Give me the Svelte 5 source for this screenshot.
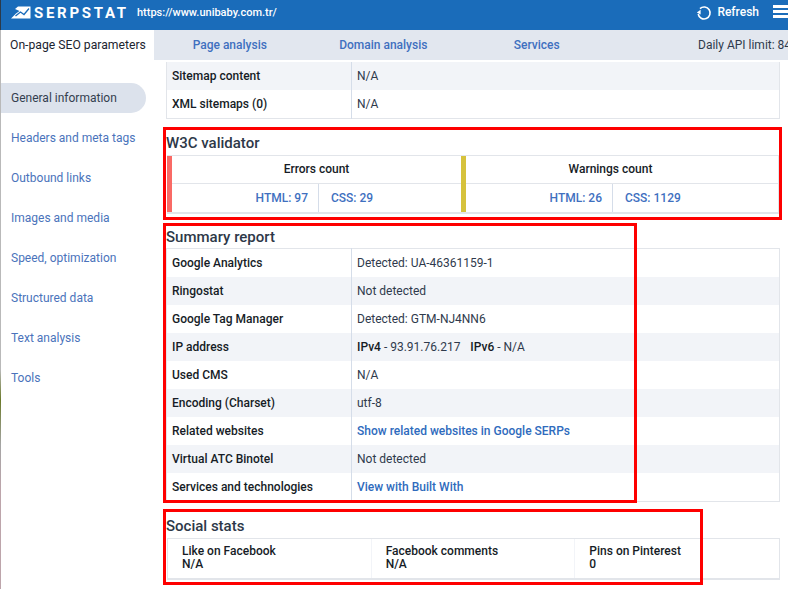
<script>
  const navTabs = ["Page analysis", "Domain analysis", "Services"];
  const sideItems = [
    "General information",
    "Headers and meta tags",
    "Outbound links",
    "Images and media",
    "Speed, optimization",
    "Structured data",
    "Text analysis",
    "Tools"
  ];
  const validators = [
    { title: "Errors count", color: "#f96a65", html: 97, css: 29 },
    { title: "Warnings count", color: "#d6c23c", html: 26, css: 1129 }
  ];
  const socials = [
    ["Like on Facebook", "N/A"],
    ["Facebook comments", "N/A"],
    ["Pins on Pinterest", "0"]
  ];
</script>

<div class="page">
  <div class="edge"></div>
  <header class="topbar">
    <svg class="logo" width="20" height="13" viewBox="0 0 20 13">
      <path fill="#fff" d="M7 0.500H19.500V12.500H0L5 7.500 8.500 5 4 3z" />
      <path fill="none" stroke="#1a6cba" stroke-width="1.300" d="M4.500 10L9.500 6 13 8.500 18 2.500" />
    </svg>
    <span class="brand">SERPSTAT</span>
    <span class="url">https://www.unibaby.com.tr/</span>
    <span class="refresh">
      <svg width="16" height="16" viewBox="0 0 16 16" fill="none">
        <path d="M4 3.600A6 6 0 1 1 2.200 9" stroke="#fff" stroke-width="1.600" />
        <path d="M0.800 7.600L4.600 4.800V9.600z" fill="#fff" />
      </svg>
      Refresh
    </span>
    <span class="burger"><i></i><i></i><i></i></span>
  </header>

  <nav class="tabs">
    <div class="tab-active">On-page SEO parameters</div>
    <div class="tab-list">
      {#each navTabs as tab}
        <span class="tab">{tab}</span>
      {/each}
    </div>
    <span class="limit">Daily API limit: 84</span>
  </nav>

  <div class="body">
    <aside class="side">
      {#each sideItems as item, i}
        <div class="side-item" class:current={i === 0}>{item}</div>
      {/each}
    </aside>

    <main class="content">
      <table class="grid first">
        <tbody>
          <tr class="odd"><th>Sitemap content</th><td>N/A</td></tr>
          <tr><th>XML sitemaps (0)</th><td>N/A</td></tr>
        </tbody>
      </table>

      <section class="w3c">
        <h2>W3C validator</h2>
        <div class="validators">
          {#each validators as v}
            <div class="validator" style="border-left-color: {v.color}">
              <div class="v-title">{v.title}</div>
              <div class="v-counts">
                <span class="v-html">HTML: {v.html}</span>
                <span class="v-css">CSS: {v.css}</span>
              </div>
            </div>
          {/each}
        </div>
      </section>

      <section class="summary">
        <h2>Summary report</h2>
        <table class="grid">
          <tbody>
            <tr><th>Google Analytics</th><td>Detected: UA-46361159-1</td></tr>
            <tr class="odd"><th>Ringostat</th><td>Not detected</td></tr>
            <tr><th>Google Tag Manager</th><td>Detected: GTM-NJ4NN6</td></tr>
            <tr class="odd">
              <th>IP address</th>
              <td><b>IPv4</b> - 93.91.76.217 &nbsp; <b class="ipv6">IPv6</b> - N/A</td>
            </tr>
            <tr><th>Used CMS</th><td>N/A</td></tr>
            <tr class="odd"><th>Encoding (Charset)</th><td>utf-8</td></tr>
            <tr><th>Related websites</th><td class="link">Show related websites in Google SERPs</td></tr>
            <tr class="odd"><th>Virtual ATC Binotel</th><td>Not detected</td></tr>
            <tr><th>Services and technologies</th><td class="link">View with Built With</td></tr>
          </tbody>
        </table>
        <div class="mark mark-summary"></div>
      </section>

      <section class="social">
        <h2>Social stats</h2>
        <div class="social-row">
          {#each socials as s}
            <div class="social-cell">{s[0]}<br />{s[1]}</div>
          {/each}
        </div>
        <div class="mark mark-social"></div>
      </section>
    </main>
  </div>
</div>

<style>
  :global(body) {
    margin: 0;
    background: #fff;
    overflow: hidden;
  }

  .page {
    position: relative;
    width: 788px;
    height: 589px;
    overflow: hidden;
    font-family: Roboto, "Liberation Sans", sans-serif;
    font-size: 12px;
    color: #1c2430;
  }

  /* sliver of whatever window sits behind */
  .edge {
    position: absolute;
    left: 0;
    top: 0;
    bottom: 0;
    width: 1px;
    background: linear-gradient(#2b3a4a 0, #2b3a4a 30px, #b9b9b9 30px, #b9b9b9 370px, #6b7a2a 400px, #a5a5a5 445px, #bda5ab 490px, #bda5ab 100%);
  }

  .topbar {
    height: 30px;
    box-sizing: border-box;
    padding-bottom: 6px;
    background: #1a6cba;
    display: flex;
    align-items: center;
    color: #fff;
  }

  .logo {
    margin-left: 11px;
    flex: none;
  }

  .brand {
    margin: 1px 0 0 3px;
    font-size: 15px;
    font-weight: 700;
    letter-spacing: 2.700px;
    width: 92px;
    white-space: nowrap;
  }

  .url {
    margin-left: 11px;
    font-size: 11px;
    font-weight: 500;
  }

  .refresh {
    margin-left: auto;
    display: flex;
    align-items: center;
    gap: 5px;
    font-size: 12px;
    font-weight: 500;
  }

  .refresh svg {
    margin-top: 2px;
  }

  .burger {
    width: 18px;
    margin: -1px -3px 0 14px;
    display: flex;
    flex-direction: column;
    gap: 2px;
    flex: none;
  }

  .burger i {
    height: 3px;
    background: #fff;
    display: block;
  }

  .tabs {
    height: 30px;
    background: #e2e7ef;
    display: flex;
    align-items: center;
    white-space: nowrap;
  }

  .tab-active {
    width: 144px;
    height: 30px;
    padding-left: 10px;
    line-height: 30px;
    font-size: 12.200px;
    background: #fff;
    flex: none;
  }

  .tab-list {
    display: flex;
    margin-left: -1px;
  }

  .tab {
    width: 153.500px;
    text-align: center;
    color: #3f70bf;
    font-weight: 500;
  }

  .limit {
    position: absolute;
    left: 698px;
    top: 38px;
    color: #2f3a4c;
  }

  .body {
    display: flex;
  }

  .side {
    width: 166px;
    flex: none;
    padding-top: 23px;
  }

  .side-item {
    width: 135px;
    height: 30px;
    line-height: 30px;
    padding-left: 11px;
    margin-bottom: 10px;
    color: #4a73bb;
  }

  .side-item.current {
    background: #dce2ec;
    color: #34404f;
    border-radius: 0 15px 15px 0;
  }

  .content {
    width: 622px;
    flex: none;
  }

  .grid {
    width: 614px;
    border-collapse: collapse;
    border: 1px solid #e2e5ea;
    table-layout: fixed;
  }

  .grid.first {
    margin-top: 2px;
    border-top: none;
  }

  .grid th {
    width: 179px;
    height: 28px;
    padding: 0 0 0 5px;
    text-align: left;
    font-weight: 500;
    color: #161c26;
    border-right: 1px solid #d5dde9;
  }

  .grid td {
    padding: 0 0 0 5px;
    color: #2f3a4c;
  }

  .grid .odd {
    background: #f2f4f8;
  }

  .grid b {
    font-weight: 500;
    color: #161c26;
  }

  .grid b.ipv6 {
    margin-left: 1px;
  }

  .grid td.link {
    color: #2f6bbd;
    font-weight: 500;
  }

  section {
    position: relative;
  }

  h2 {
    margin: 0;
    font-size: 15px;
    font-weight: 500;
    line-height: 20px;
    color: #2d3848;
  }

  .w3c {
    margin: 8px 0 0 -3px;
    width: 619px;
    height: 93px;
    box-sizing: border-box;
    padding-top: 3px;
    border: 3px solid #fe0000;
  }

  .mark {
    position: absolute;
    pointer-events: none;
    box-sizing: border-box;
    border: 3px solid #fe0000;
  }

  .validators {
    display: flex;
    width: 612px;
    margin: 2px 0 0 1px;
    border-top: 1px solid #e2e5ea;
    border-bottom: 2px solid #e2e5ea;
    border-right: 1px solid #e2e5ea;
    box-sizing: border-box;
  }

  .validator {
    flex: none;
    width: 294px;
    border-left: 5px solid;
    box-sizing: border-box;
  }

  .validator:last-child {
    flex: 1;
  }

  .v-title {
    width: 289px;
    height: 27px;
    line-height: 27px;
    text-align: center;
    font-weight: 500;
    color: #161c26;
  }

  .v-counts {
    display: flex;
    height: 28px;
    line-height: 28px;
    color: #3f70bf;
    font-weight: 500;
    border-top: 1px solid #e2e5ea;
  }

  .v-html {
    width: 147px;
    text-align: right;
    padding-right: 10px;
    box-sizing: border-box;
    border-right: 1px solid #d5dde9;
  }

  .v-css {
    padding-left: 12px;
  }

  .summary {
    margin-top: 4px;
  }

  .summary h2 {
    padding-top: 3px;
    padding-bottom: 1px;
  }

  .mark-summary {
    left: -3px;
    top: -1px;
    width: 474px;
    height: 280px;
  }

  .social {
    margin-top: 14px;
  }

  .social-row {
    display: flex;
    width: 613px;
    height: 42px;
    margin: 2px 0 0 1px;
    border: 1px solid #e2e5ea;
    border-bottom-width: 2px;
    box-sizing: border-box;
  }

  .social-cell {
    width: 204px;
    box-sizing: border-box;
    padding: 6px 0 0 14px;
    line-height: 13px;
    font-weight: 500;
    color: #161c26;
    border-right: 1px solid #f2f4f8;
  }

  .social-cell:last-child {
    border-right: none;
  }

  .mark-social {
    left: -3px;
    top: -7px;
    width: 540px;
    height: 76px;
  }
</style>
